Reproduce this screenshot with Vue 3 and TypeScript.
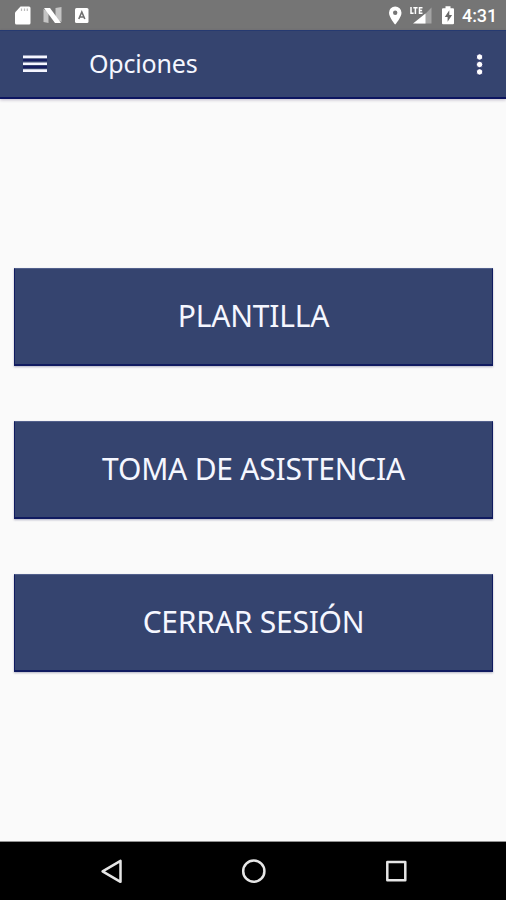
<script setup lang="ts">
interface Option {
  id: string
  label: string
}

const options: Option[] = [
  { id: 'plantilla', label: 'PLANTILLA' },
  { id: 'asistencia', label: 'TOMA DE ASISTENCIA' },
  { id: 'salir', label: 'CERRAR SESIÓN' },
]
</script>

<template>
  <div class="screen">
    <div class="status">
      <svg width="110" height="30" viewBox="0 0 110 30">
        <path fill="#fff" d="M20.500 6.500H29a1.500 1.500 0 0 1 1.500 1.500V23A1.500 1.500 0 0 1 29 24.500H16.500A1.500 1.500 0 0 1 15 23V12.500Z" />
        <path stroke="#bbb" stroke-width="1.200" d="M21.500 8.500v2.500M24.500 8.500v2.500M27.300 8.500v2.500" />
        <path fill="#c4c4c4" d="M43.500 9l5 3v11l-5-1zM55.500 8l6-1v15l-6-3z" />
        <path fill="#fff" d="M44 8h6L61 23h-6z" />
        <rect x="75" y="8" width="13.500" height="15" rx="1.500" fill="#fff" />
        <path fill="none" stroke="#707070" stroke-width="1.600" d="M78.800 19l3-7 3 7M80 17h3.600" />
      </svg>
      <div class="status-right">
        <svg width="80" height="30" viewBox="0 0 80 30">
          <path fill="#fff" fill-rule="evenodd" d="M13.200 6.500a6.300 6.300 0 0 1 6.300 6.200C19.500 17.500 13.200 24.500 13.200 24.500S7 17.500 7 12.700a6.200 6.200 0 0 1 6.200-6.200Zm0 4a2.200 2.200 0 1 0 0 4.400a2.200 2.200 0 0 0 0-4.400Z" />
          <path fill="#a3a3a3" d="M49.500 7.500V23.500H34z" />
          <path fill="#757575" d="M27 5h14.500v9.500H27z" />
          <path fill="#fff" d="M43.500 13.500V23.500H31z" />
          <path fill="none" stroke="#fff" stroke-width="1.500" d="M29 7v6.300h2.600M31.300 7.700h4.300M33.400 7.700V14M40.500 7.700h-3v5.600h3M37.500 10.500h2.600" />
          <path fill="#fff" d="M63.500 6.200h5v2h2.500q1 0 1 1V23.200q0 1-1 1H61q-1 0-1-1V9.200q0-1 1-1h2.500z" />
          <path fill="#686868" d="M67.300 10.300L62.800 16.900h2.800v4.900l4.500-6.700h-2.800z" />
        </svg>
        <span class="time">4:31</span>
      </div>
    </div>

    <header class="bar">
      <svg width="24" height="20" viewBox="0 0 24 20">
        <path stroke="#060b58" stroke-opacity=".65" stroke-width="2" d="M0 6h24M0 13h24" />
        <path stroke="#f5f6ff" stroke-width="2.600" d="M0 2.900h24M0 9.800h24M0 16.600h24" />
      </svg>
      <h1 class="title">Opciones</h1>
      <svg width="12" height="26" viewBox="0 0 12 26">
        <g fill="#fff" stroke="#15205c" stroke-width=".8">
          <circle cx="5.600" cy="6" r="3.200" />
          <circle cx="5.600" cy="13.500" r="3.200" />
          <circle cx="5.600" cy="20.900" r="3.200" />
        </g>
      </svg>
    </header>

    <main class="content">
      <button v-for="option in options" :key="option.id" class="option" type="button">
        {{ option.label }}
      </button>
    </main>

    <nav class="nav">
      <svg width="506" height="58" viewBox="0 0 506 58">
        <g fill="none" stroke="#e6e6e6" stroke-width="2.500" stroke-linejoin="round">
          <path d="M120.500 18.800v21L102.600 29.300z" />
          <circle cx="253.800" cy="29.200" r="10.600" />
          <rect x="387.300" y="20" width="18" height="18.300" />
        </g>
      </svg>
    </nav>
  </div>
</template>

<style>
body {
  margin: 0;
}
</style>

<style scoped>
.screen {
  display: flex;
  flex-direction: column;
  width: 506px;
  height: 900px;
  overflow: hidden;
  background: #fafafa;
  font-family: "Noto Sans", sans-serif;
}

.status {
  display: flex;
  justify-content: space-between;
  height: 30px;
  background: #757575;
}

.status svg {
  display: block;
}

.status-right {
  display: flex;
  align-items: center;
  width: 124px;
}

.time {
  padding-top: 2px;
  color: #fff;
  font: 500 18px/28px Roboto, sans-serif;
  letter-spacing: -0.1px;
}

.bar {
  display: flex;
  align-items: center;
  box-sizing: border-box;
  height: 69px;
  padding: 0 20px 0 23px;
  border-top: 1px solid #263a70;
  border-bottom: 2px solid #0c1560;
  background: #35446f;
  box-shadow: 0 1px 3px rgba(60, 40, 90, 0.3);
}

.title {
  margin: 0 auto 0 42px;
  padding-bottom: 2px;
  color: #f5f7ff;
  font-size: 25px;
  font-weight: 400;
  line-height: 34px;
  letter-spacing: -0.2px;
}

.content {
  display: flex;
  flex: 1;
  flex-direction: column;
  gap: 55px;
  padding: 169px 13px 0 14px;
}

.option {
  box-sizing: border-box;
  width: 100%;
  height: 98px;
  padding: 0 0 2px;
  border: 1px solid #101b60;
  border-top-color: #52608c;
  border-bottom-width: 2px;
  background: #35446f;
  box-shadow: 0 1px 2px rgba(40, 40, 90, 0.35);
  color: #f5f7ff;
  font: 400 30px/40px "Noto Sans", sans-serif;
  letter-spacing: -0.22px;
  white-space: nowrap;
}

.nav {
  box-sizing: border-box;
  height: 58px;
  background: #000;
  box-shadow: 0 -1px 0 #929292;
}

.nav svg {
  display: block;
}
</style>
